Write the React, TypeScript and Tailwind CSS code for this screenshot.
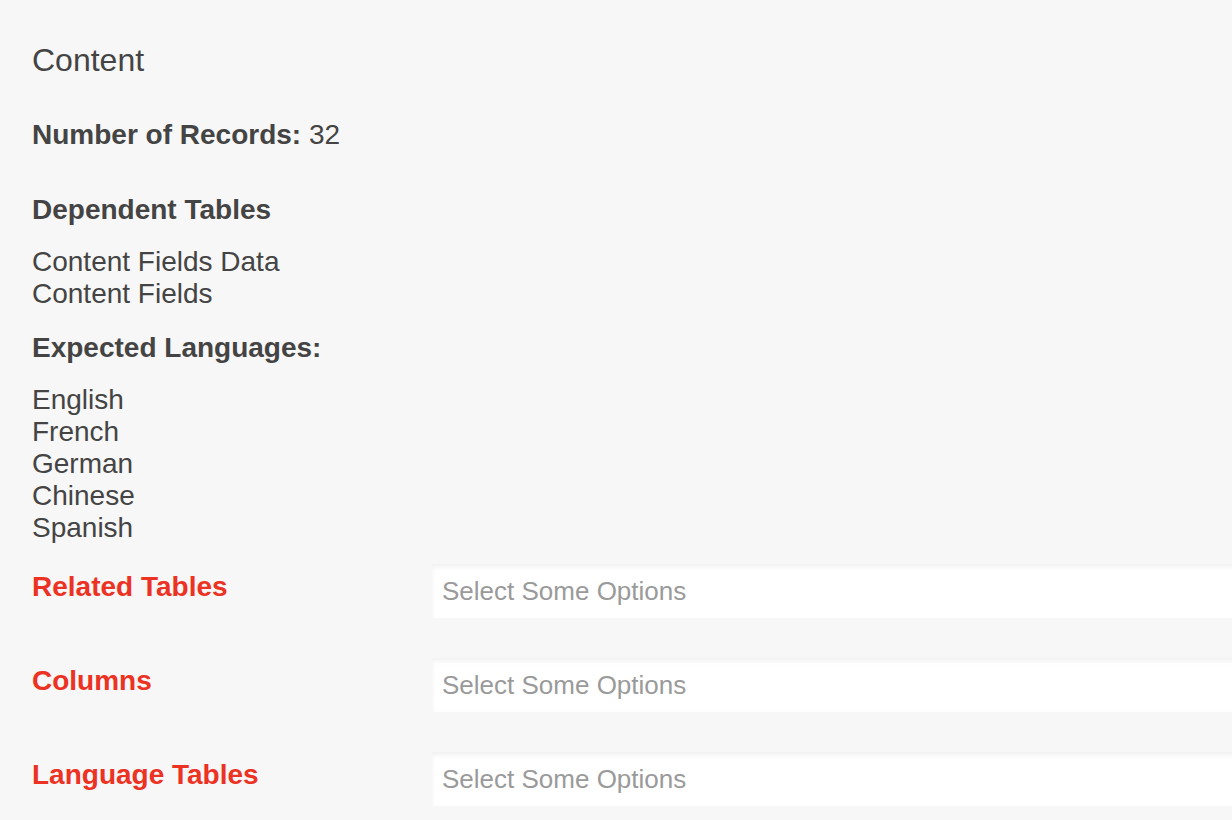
const font = { fontFamily: '"Liberation Sans", Arial, Helvetica, sans-serif' }

const DEPENDENT = ['Content Fields Data', 'Content Fields']
const LANGUAGES = ['English', 'French', 'German', 'Chinese', 'Spanish']
const SELECTS = ['Related Tables', 'Columns', 'Language Tables']

function SelectRow({ label }: { label: string }) {
  return (
    <div className="flex items-start">
      <div className="w-[400px] shrink-0 pt-[7px] text-[28px] leading-[32px] font-bold text-[#ec3223]">
        {label}
      </div>
      <div className="-mr-[40px] flex-1 h-[54px] bg-white pl-[10px] text-[26px] leading-[54px] text-[#9a9a9a] shadow-[inset_0_3px_5px_rgba(0,0,0,0.06)]">
        Select Some Options
      </div>
    </div>
  )
}

export default function App() {
  return (
    <div
      style={font}
      className="min-h-[820px] w-full overflow-hidden bg-[#f7f7f7] pl-[32px] pt-[40px] text-[#444444]"
    >
      <h1 className="text-[32px] leading-[40px] font-normal">Content</h1>

      <div className="mt-[39px] text-[28px] leading-[32px]">
        <span className="font-bold">Number of Records:</span>{' '}
        <span>32</span>
      </div>

      <h2 className="mt-[43px] text-[28px] leading-[32px] font-bold">Dependent Tables</h2>
      <ul className="mt-[20px] text-[28px] leading-[32px]">
        {DEPENDENT.map((d) => (
          <li key={d}>{d}</li>
        ))}
      </ul>

      <h2 className="mt-[22px] text-[28px] leading-[32px] font-bold">Expected Languages:</h2>
      <ul className="mt-[20px] text-[28px] leading-[32px]">
        {LANGUAGES.map((l) => (
          <li key={l}>{l}</li>
        ))}
      </ul>

      <div className="mt-[20px] flex flex-col gap-[40px]">
        {SELECTS.map((s) => (
          <SelectRow key={s} label={s} />
        ))}
      </div>
    </div>
  )
}
